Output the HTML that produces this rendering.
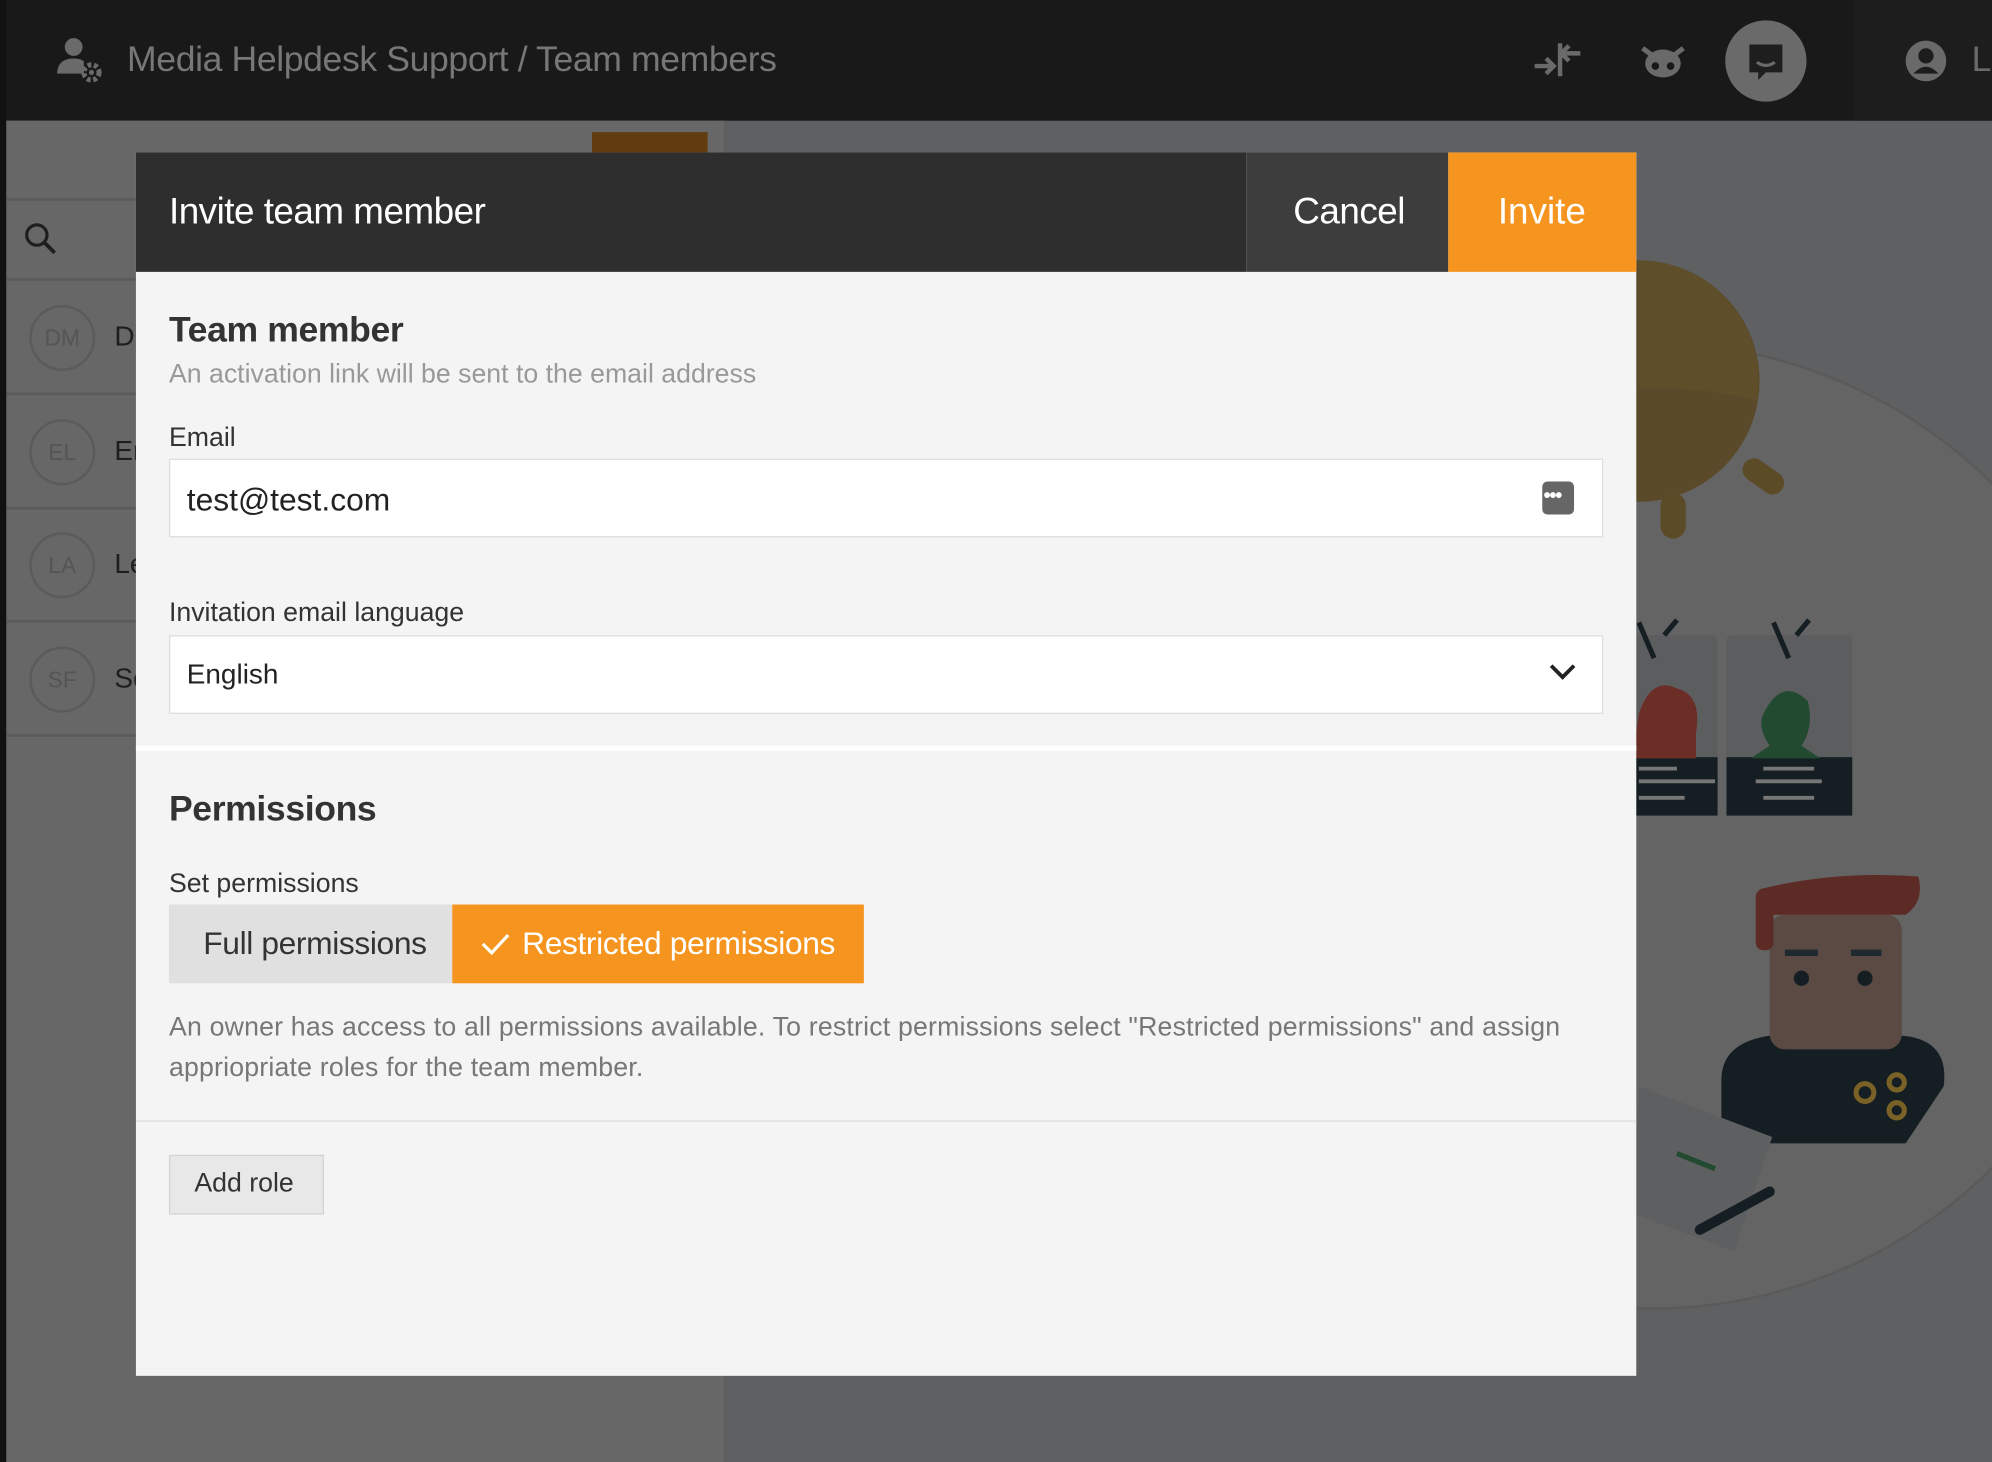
<!DOCTYPE html>
<html><head><meta charset="utf-8"><style>
html,body{margin:0;padding:0;width:1992px;height:1462px;overflow:hidden;background:#5f6061}
#w{position:absolute;left:0;top:0;width:1568px;height:1151px;transform:scale(1.27041);transform-origin:0 0;font-family:"Liberation Sans",sans-serif;overflow:hidden;background:#5f6061}
.a{position:absolute}
.t{position:absolute;white-space:nowrap}
</style></head><body><div id="w">
<div class="a" style="left:0;top:0;width:1568px;height:95px;background:#191919"></div>
<div class="a" style="left:0;top:0;width:5px;height:1151px;background:#111"></div>
<div class="a" style="left:1460px;top:0;width:108px;height:95px;background:#1d1d1d"></div>
<svg class="a" style="left:42px;top:28px" width="40" height="40" viewBox="0 0 40 40"><circle cx="16" cy="9" r="7" fill="#6a6a6a"/><path d="M3 30c0-9 6-12 13-12 4 0 6 1 8 2v10z" fill="#6a6a6a"/><circle cx="30" cy="29" r="6" fill="none" stroke="#6a6a6a" stroke-width="4" stroke-dasharray="3 2"/><circle cx="30" cy="29" r="2" fill="#6a6a6a"/></svg>
<div class="t" style="left:100px;top:31px;font-size:28px;color:#777;letter-spacing:-0.3px">Media Helpdesk Support / Team members</div>
<svg class="a" style="left:1206px;top:32px" width="40" height="30" viewBox="0 0 40 30"><path d="M2 20h14M11 14l6 6-6 6M38 10h-14M29 4l-6 6 6 6M22 2v26" stroke="#6a6a6a" stroke-width="3.5" fill="none"/></svg>
<svg class="a" style="left:1289px;top:30px" width="40" height="36" viewBox="0 0 40 36"><ellipse cx="20" cy="20" rx="14" ry="11" fill="#6a6a6a"/><path d="M4 8l8 6M36 8l-8 6" stroke="#6a6a6a" stroke-width="4"/><circle cx="14" cy="22" r="3" fill="#191919"/><circle cx="26" cy="22" r="3" fill="#191919"/></svg>
<div class="a" style="left:1358px;top:16px;width:64px;height:64px;border-radius:50%;background:#6a6a6a"></div>
<svg class="a" style="left:1374px;top:32px" width="32" height="34" viewBox="0 0 32 34"><path d="M3 3h26v22H16l-6 6v-6H3z" fill="#1e1e1e"/><path d="M9 17q7 5 14 0" stroke="#6a6a6a" stroke-width="2.5" fill="none"/></svg>
<svg class="a" style="left:1499px;top:31px" width="34" height="34" viewBox="0 0 34 34"><circle cx="17" cy="17" r="16" fill="#6a6a6a"/><circle cx="17" cy="13" r="6" fill="#1d1d1d"/><path d="M7 27q10-11 20 0" fill="#1d1d1d"/></svg>
<div class="t" style="left:1552px;top:31px;font-size:28px;color:#6a6a6a">L</div>
<div class="a" style="left:5px;top:95px;width:565px;height:1056px;background:#676767;border-right:1px solid #5a5a5a"></div>
<div class="a" style="left:466px;top:104px;width:91px;height:20px;background:#623c10"></div>
<div class="a" style="left:5px;top:156px;width:565px;height:2px;background:#5a5a5a"></div>
<svg class="a" style="left:18px;top:174px" width="28" height="28" viewBox="0 0 28 28"><circle cx="11" cy="11" r="8" stroke="#1e1e1e" stroke-width="2.5" fill="none"/><path d="M17 17l8 8" stroke="#1e1e1e" stroke-width="3"/></svg>
<div class="a" style="left:5px;top:219px;width:565px;height:2px;background:#5a5a5a"></div>
<div class="a" style="left:5px;top:309px;width:565px;height:2px;background:#5a5a5a"></div>
<div class="a" style="left:5px;top:399px;width:565px;height:2px;background:#5a5a5a"></div>
<div class="a" style="left:5px;top:488px;width:565px;height:2px;background:#5a5a5a"></div>
<div class="a" style="left:5px;top:578px;width:565px;height:2px;background:#5a5a5a"></div>
<div class="a" style="left:23px;top:240px;width:48px;height:48px;border:2px solid #5b5b5b;border-radius:50%;color:#555;font-size:18px;text-align:center;line-height:48px">DM</div>
<div class="a" style="left:23px;top:330px;width:48px;height:48px;border:2px solid #5b5b5b;border-radius:50%;color:#555;font-size:18px;text-align:center;line-height:48px">EL</div>
<div class="a" style="left:23px;top:419px;width:48px;height:48px;border:2px solid #5b5b5b;border-radius:50%;color:#555;font-size:18px;text-align:center;line-height:48px">LA</div>
<div class="a" style="left:23px;top:509px;width:48px;height:48px;border:2px solid #5b5b5b;border-radius:50%;color:#555;font-size:18px;text-align:center;line-height:48px">SF</div>
<div class="t" style="left:90px;top:252px;font-size:22px;color:#1e1e1e">D</div>
<div class="t" style="left:90px;top:342px;font-size:22px;color:#1e1e1e">Er</div>
<div class="t" style="left:90px;top:431px;font-size:22px;color:#1e1e1e">Le</div>
<div class="t" style="left:90px;top:521px;font-size:22px;color:#1e1e1e">So</div>
<svg class="a" style="left:1200px;top:180px" width="368" height="870" viewBox="1200 180 368 870">
<circle cx="1300" cy="650" r="380" fill="#646464" stroke="#5a5a5a" stroke-width="2"/>
<circle cx="1290" cy="300" r="95" fill="#5a4a29"/>
<path d="M1290 205a95 95 0 0 1 93 110q-40-10-93-10z" fill="#5f4e2a"/>
<rect x="1307" y="388" width="20" height="36" rx="10" fill="#5c4b27"/>
<rect x="1370" y="366" width="36" height="18" rx="9" transform="rotate(35 1388 375)" fill="#5c4b27"/>
<rect x="1286" y="500" width="66" height="142" rx="4" fill="#5c5d5e"/>
<rect x="1359" y="500" width="99" height="142" rx="4" fill="#5c5d5e"/>
<rect x="1286" y="596" width="66" height="46" fill="#151e22"/>
<rect x="1359" y="596" width="99" height="46" fill="#151e22"/>
<path d="M1290 562q10-30 30-20 20 5 15 35l0 20h-50z" fill="#6a2e26"/>
<path d="M1388 562q15-30 35-10 5 20-5 35l15 10h-55l15-10q-10-15-5-25z" fill="#214a30"/>
<path d="M1290 490l12 28M1320 488l-10 12M1396 490l12 28M1424 488l-10 12" stroke="#151e22" stroke-width="4"/>
<path d="M1388 605h40M1382 615h52M1388 628h40" stroke="#777" stroke-width="3"/>
<path d="M1290 605h30M1290 615h60M1290 628h36" stroke="#777" stroke-width="3"/>
<path d="M1355 900v-50q0-30 40-35h95q45 0 40 40l-30 45z" fill="#151e22"/>
<rect x="1393" y="720" width="104" height="106" rx="12" fill="#5a4a43"/>
<path d="M1385 700q60-15 125-10 5 20-10 30h-115z" fill="#5c2b26"/>
<rect x="1382" y="700" width="14" height="48" rx="6" fill="#5c2b26"/>
<path d="M1405 750h26M1457 750h24" stroke="#1e2a30" stroke-width="5"/>
<circle cx="1418" cy="770" r="6" fill="#151e22"/><circle cx="1468" cy="770" r="6" fill="#151e22"/>
<g fill="none" stroke="#7a6227" stroke-width="4"><circle cx="1468" cy="860" r="7"/><circle cx="1493" cy="852" r="6"/><circle cx="1493" cy="874" r="6"/></g>
<path d="M1290 855l105 40-30 90-80-30z" fill="#5e5f60"/>
<path d="M1320 908l30 12" stroke="#214a30" stroke-width="4"/>
<path d="M1338 968l55-30" stroke="#151e22" stroke-width="8" stroke-linecap="round"/>
</svg>
<div class="a" style="left:107px;top:120px;width:1181px;height:963px;background:#f4f4f4"></div>
<div class="a" style="left:107px;top:120px;width:874px;height:94px;background:#2e2e2e"></div>
<div class="a" style="left:981px;top:120px;width:159px;height:94px;background:#3d3d3d"></div>
<div class="a" style="left:1140px;top:120px;width:148px;height:94px;background:#f5951f"></div>
<div class="t" style="left:133px;top:151px;font-size:29px;color:#fff;letter-spacing:-0.4px">Invite team member</div>
<div class="t" style="left:1018px;top:151px;font-size:29px;color:#fff;letter-spacing:-0.4px">Cancel</div>
<div class="t" style="left:1179px;top:151px;font-size:29px;color:#fff">Invite</div>
<div class="t" style="left:133px;top:244px;font-size:28px;font-weight:bold;color:#333;letter-spacing:-0.3px">Team member</div>
<div class="t" style="left:133px;top:283px;font-size:21px;color:#999">An activation link will be sent to the email address</div>
<div class="t" style="left:133px;top:333px;font-size:21px;color:#333">Email</div>
<div class="a" style="left:133px;top:361px;width:1127px;height:60px;background:#fff;border:1px solid #ddd"></div>
<div class="t" style="left:147px;top:380px;font-size:25px;color:#222">test@test.com</div>
<div class="a" style="left:1214px;top:379px;width:25px;height:26px;border-radius:4px;background:#666"></div>
<div class="t" style="left:1215px;top:382px;font-size:16px;color:#fff;font-weight:bold;letter-spacing:-1px">•••</div>
<div class="t" style="left:133px;top:471px;font-size:21px;color:#333">Invitation email language</div>
<div class="a" style="left:133px;top:500px;width:1127px;height:60px;background:#fff;border:1px solid #ddd"></div>
<div class="t" style="left:147px;top:518px;font-size:22px;color:#222">English</div>
<svg class="a" style="left:1219px;top:520px" width="22" height="16" viewBox="0 0 22 16"><path d="M2 4l9 9 9-9" stroke="#222" stroke-width="3" fill="none"/></svg>
<div class="a" style="left:107px;top:587px;width:1181px;height:4px;background:#fff"></div>
<div class="t" style="left:133px;top:621px;font-size:28px;font-weight:bold;color:#333;letter-spacing:-0.3px">Permissions</div>
<div class="t" style="left:133px;top:684px;font-size:21px;color:#333">Set permissions</div>
<div class="a" style="left:133px;top:712px;width:223px;height:62px;background:#e0e0e0"></div>
<div class="t" style="left:160px;top:729px;font-size:25px;color:#333;letter-spacing:-0.3px">Full permissions</div>
<div class="a" style="left:356px;top:712px;width:324px;height:62px;background:#f5951f"></div>
<svg class="a" style="left:378px;top:733px" width="24" height="20" viewBox="0 0 24 20"><path d="M2 10l7 7L22 3" stroke="#fff" stroke-width="2.5" fill="none"/></svg>
<div class="t" style="left:411px;top:729px;font-size:25px;color:#fff;letter-spacing:-0.3px">Restricted permissions</div>
<div class="t" style="left:133px;top:797px;font-size:21px;color:#777;letter-spacing:0.15px">An owner has access to all permissions available. To restrict permissions select "Restricted permissions" and assign</div>
<div class="t" style="left:133px;top:829px;font-size:21px;color:#777;letter-spacing:0.15px">appriopriate roles for the team member.</div>
<div class="a" style="left:107px;top:882px;width:1181px;height:1px;background:#ddd"></div>
<div class="a" style="left:133px;top:909px;width:120px;height:45px;background:#e8e8e8;border:1px solid #d2d2d2"></div>
<div class="t" style="left:153px;top:920px;font-size:21px;color:#333">Add role</div>
</div></body></html>
